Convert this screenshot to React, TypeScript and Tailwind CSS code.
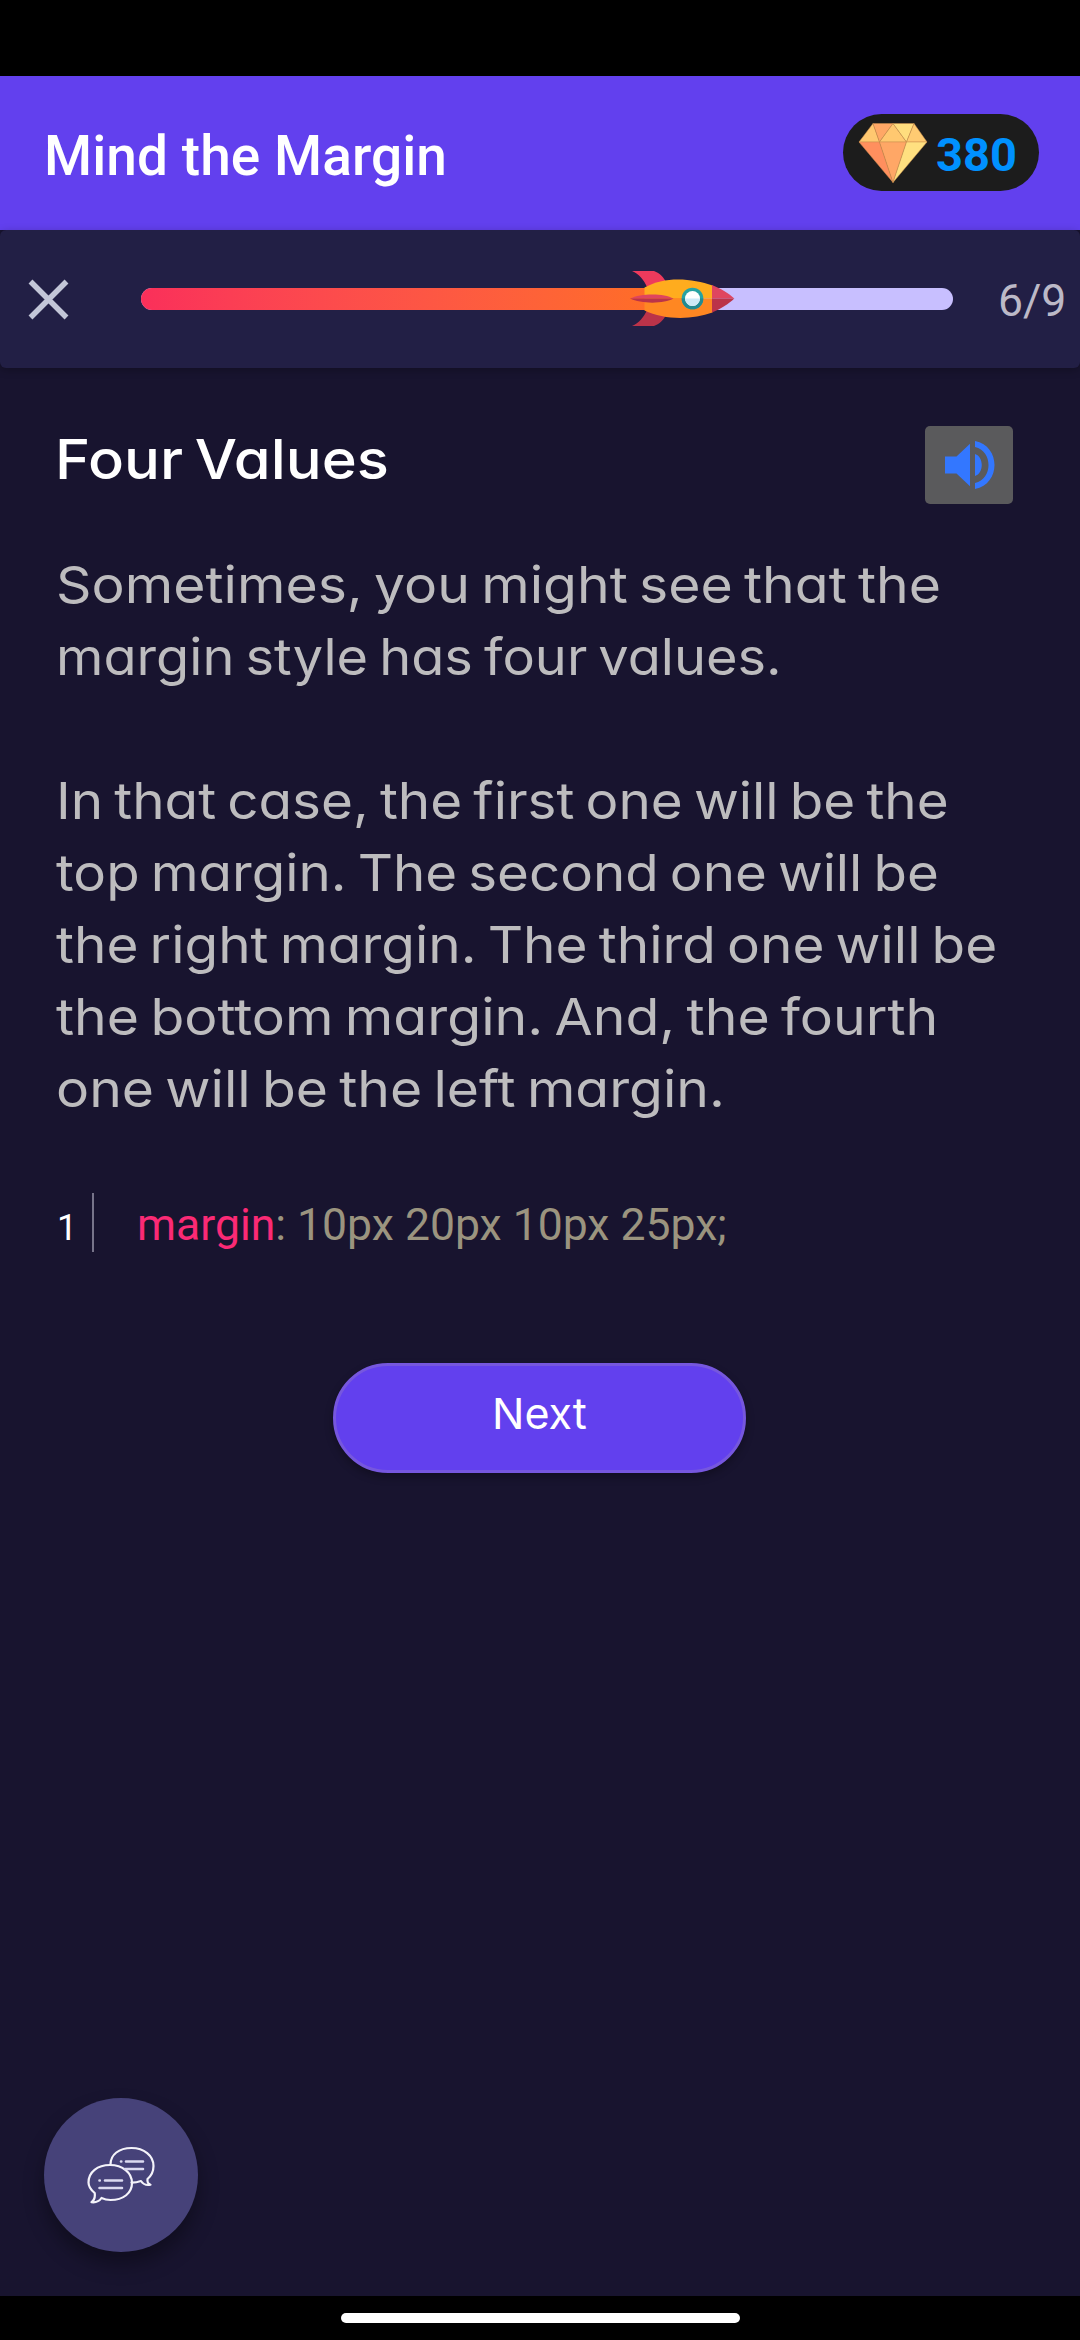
const paragraphs = [
  [
    { text: "Sometimes, you might see that the", stretch: "scale-x-[1.085]" },
    { text: "margin style has four values.", stretch: "scale-x-[1.062]" },
  ],
  [
    { text: "In that case, the first one will be the", stretch: "scale-x-[1.075]" },
    { text: "top margin. The second one will be", stretch: "scale-x-[1.072]" },
    { text: "the right margin. The third one will be", stretch: "scale-x-[1.077]" },
    { text: "the bottom margin. And, the fourth", stretch: "scale-x-[1.086]" },
    { text: "one will be the left margin.", stretch: "scale-x-[1.084]" },
  ],
];

function Gem() {
  return (
    <svg className="h-[60px] w-[70px]" viewBox="0 0 70 60" aria-hidden="true">
      <g stroke="#c98d4c" strokeWidth="0.5" strokeLinejoin="round">
        <path d="M15 .5 1 19h20.500z" fill="#ffc870" />
        <path d="M15 .5h20L21.500 19z" fill="#ffa766" />
        <path d="M35 .5 21.500 19h27z" fill="#ffc870" />
        <path d="M35 .5h21L48.500 19z" fill="#ffdd7e" />
        <path d="M56 .5 69 19H48.500z" fill="#ffcb72" />
        <path d="M1 19h20.500L35 59.500z" fill="#ff8f5e" />
        <path d="M21.500 19h27L35 59.500z" fill="#ffa766" />
        <path d="M48.500 19H69L35 59.500z" fill="#ffe080" />
      </g>
    </svg>
  );
}

function Rocket() {
  return (
    <svg className="absolute -top-[17px] left-[489px] h-[55px] w-[105px]" viewBox="0 0 105 55" aria-hidden="true">
      <path d="M2 0h22c6 2 10 7 12 11L17 16C14 9 9 3 2 0z" fill="#ee3a5c" />
      <path d="M2 55h22c6-2 10-7 12-11L17 39C14 46 9 52 2 55z" fill="#bb3349" />
      <path d="M14.500 27.500V16.500C34 5 62 7 82.500 14.500v13z" fill="#ffac1e" />
      <path d="M14.500 27.500v12C34 49 62 49 82.500 41.500v-14z" fill="#ff8722" />
      <path d="M82 14c9 3.500 17 8.500 22.300 13.500H82z" fill="#df455f" />
      <path d="M82 41.500c9-3.500 17-9 22.300-14H82z" fill="#bb3349" />
      <path d="M0 27.500c11-5.500 34-5.500 43.500 0z" fill="#df455f" />
      <path d="M0 27.500c11 5.500 34 5.500 43.500 0z" fill="#bb3349" />
      <circle cx="62.500" cy="27.500" r="10.800" fill="#27a2a2" />
      <path d="M51.700 27.500a10.800 10.800 0 0 0 21.600 0z" fill="#238a92" />
      <circle cx="62.500" cy="27.500" r="7.500" fill="#fff" />
      <path d="M55 27.500a7.500 7.500 0 0 0 15 0z" fill="#cdeaf8" />
    </svg>
  );
}

function ChatBubbles() {
  return (
    <svg className="h-[58px] w-[68px]" viewBox="0 0 68 58" fill="none" stroke="#f4f3fa" strokeWidth="2.200" strokeLinejoin="round" strokeLinecap="round" aria-hidden="true">
      <path d="M23.500 18.500C23.500 8.500 32 2 44.500 2S66.500 9.500 66.500 20c0 6-2.500 10-6 13-.5 3.500 1 5 3 5.700-3.500.8-7.500-.7-9.500-3.700-3 1-6 1.700-9.500 1.600" />
      <path d="M45 37c0 10-8.500 17-21.500 17-3.500 0-6.500-.8-9-2-2 3-6 4.700-10 4.200 3-2.200 3.800-5 3.200-9.200C4 44 1.500 41 1.500 36.500c0-10.500 9-17.500 21.500-17.500S45 26.500 45 37z" />
      <path d="M34 15.500h.3M39 15.500h17M38 23h18M12.500 34.500h.3M18 34.500h17M12.500 42h22.500" strokeWidth="2.600" stroke="#dcdaf0" />
    </svg>
  );
}

export default function App() {
  return (
    <div className="flex h-[2340px] w-[1080px] flex-col overflow-hidden bg-[#18142f] font-['Inter',sans-serif]">
      <div className="h-[76px] shrink-0 bg-black" />
      <header className="flex h-[154px] shrink-0 items-center justify-between bg-[#6240ee] pr-[41px] pl-[44px] font-['Roboto',sans-serif]">
        <h1 className="pt-1.5 text-[55px] leading-none font-medium tracking-[0.07px] whitespace-nowrap text-white">Mind the Margin</h1>
        <div className="mb-px flex h-[77px] w-[196px] items-center rounded-full bg-[#1c1c1c] pl-[15px]">
          <Gem />
          <span className="pt-1 pl-2 text-[47px] leading-none font-bold text-[#0091ff]">380</span>
        </div>
      </header>

      <section className="flex h-[138px] shrink-0 items-center rounded-md bg-[#221f45] font-['Roboto',sans-serif] shadow-[0_2px_8px_rgba(0,0,0,0.25)]">
        <button className="ml-[28px] h-[41px] w-[41px]" aria-label="Close">
          <svg viewBox="0 0 41 41" className="h-full w-full" stroke="#c3c6d8" strokeWidth="5.500"><path d="m2.500 2.500 36 36m0-36-36 36" /></svg>
        </button>
        <div className="relative ml-[72px] h-[22px] w-[812px] rounded-full bg-[#c8bfff]">
          <div className="h-full w-[541px] rounded-l-full bg-linear-to-r from-[#fa2f5a] to-[#ff7020]" />
          <Rocket />
        </div>
        <span className="ml-[45px] pt-1 text-[44.5px] leading-none text-[#bcb9c7]">6/9</span>
      </section>

      <main className="flex grow flex-col pt-[58px] [font-feature-settings:'cv11']">
        <div className="flex h-[78px] items-start justify-between pr-[67px] pl-[55px]">
          <h2 className="origin-left scale-x-[1.086] text-[55px] leading-[66px] font-medium whitespace-nowrap text-white [word-spacing:-4px]">Four Values</h2>
          <button className="flex h-[78px] w-[88px] items-center justify-center rounded-[5px] bg-[#5a5a5c]" aria-label="Read aloud">
            <svg viewBox="0 0 50 50" className="ml-[1px] h-[50px] w-[50px]" fill="#3377ff">
              <path d="M0 16.500h11.500L25 3.700v42.600L11.500 33.500H0zM30 14c9 2.500 9 19.500 0 22zM30 1c26 5 26 43 0 48v-6c18-4 18-32 0-36z" />
            </svg>
          </button>
        </div>

        <div className="mt-[45px] flex flex-col gap-[72px] pl-[56px] text-[51px] leading-[72px] text-[#bdbcbe] [word-spacing:-4px]">
          {paragraphs.map((lines) => (
            <p key={lines[0].text}>
              {lines.map((line) => (
                <span key={line.text} className={`block w-fit origin-left whitespace-nowrap ${line.stretch}`}>{line.text}</span>
              ))}
            </p>
          ))}
        </div>

        <div className="mt-[68px] flex h-[59px] items-center font-['Roboto',sans-serif]">
          <span className="ml-[57px] w-[35px] pt-[10px] text-[36px] leading-none text-white">1</span>
          <div className="h-[59px] w-[2px] bg-[#77748a]" />
          <code className="ml-[43px] pt-1.5 font-['Roboto',sans-serif] text-[44.5px] leading-none whitespace-pre text-[#9b947f]"><span className="text-[#fb2a75]">margin</span>: 10px 20px 10px 25px;</code>
        </div>

        <button className="mt-[111px] ml-[333px] flex h-[110px] w-[413px] items-center justify-center rounded-full border-[3px] border-[#7657de] bg-[#6240ee] pb-[10px] text-[43px] text-white shadow-[0_4px_8px_rgba(0,0,0,0.3)]">
          Next
        </button>

        <button className="mt-auto mb-[44px] ml-[44px] flex h-[154px] w-[154px] shrink-0 items-center justify-center rounded-full bg-[#464279] shadow-[0_12px_20px_rgba(0,0,0,0.35)]" aria-label="Open chat">
          <ChatBubbles />
        </button>
      </main>

      <footer className="flex h-[44px] shrink-0 justify-center bg-black pt-[17px]">
        <div className="h-[10px] w-[399px] rounded-full bg-white" />
      </footer>
    </div>
  );
}
